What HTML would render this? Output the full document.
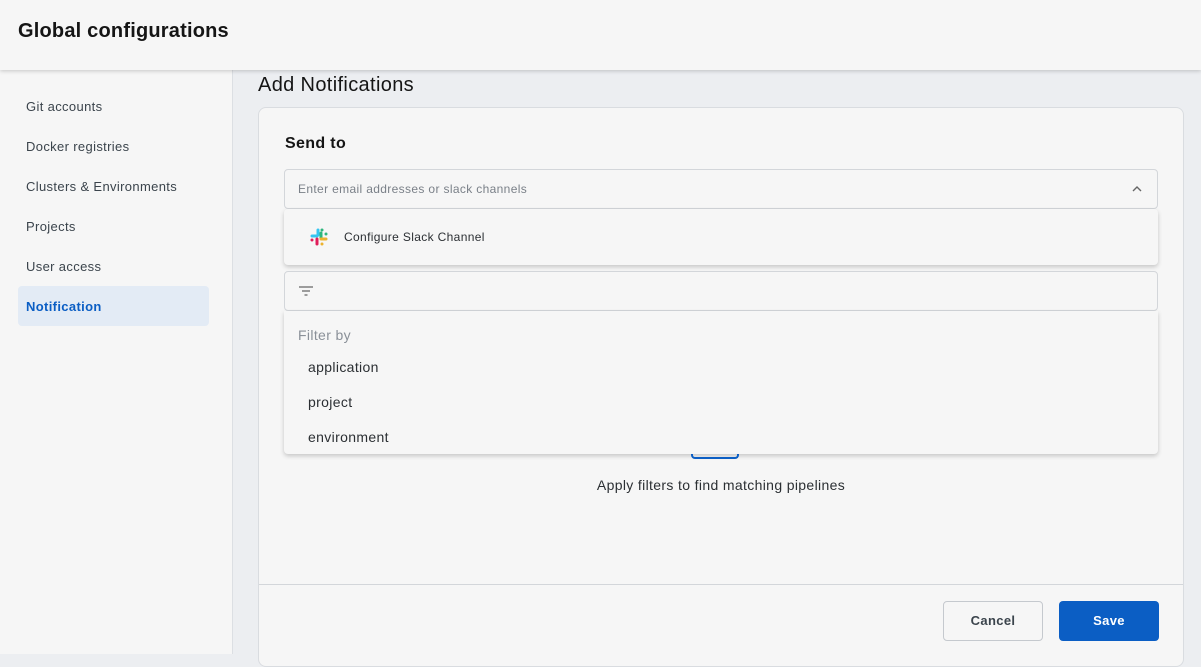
<!DOCTYPE html>
<html><head><meta charset="utf-8"><style>
*{box-sizing:border-box;margin:0;padding:0}
body{width:1201px;height:654px;overflow:hidden;background:#eceef1;font-family:"Liberation Sans",sans-serif;color:#151515;position:relative;letter-spacing:0.35px}
.hdr{position:absolute;left:0;top:0;width:1201px;height:70px;background:#f6f6f6;box-shadow:0 1px 4px rgba(0,0,0,.2);z-index:2}
.hdr h1{position:absolute;left:18px;top:20px;font-size:20px;font-weight:bold;color:#151515;letter-spacing:0.2px}
.side{position:absolute;left:0;top:70px;width:233px;height:584px;background:#f6f6f6;border-right:1px solid #dcdfe3}
.side div{position:absolute;left:18px;width:191px;height:40px;line-height:42px;padding-left:8px;font-size:13px;color:#3b444c}
.side .act{background:#e3ebf5;color:#0b5ec4;font-weight:bold;border-radius:4px}
.title{position:absolute;left:258px;top:74px;font-size:20px;color:#151515}
.card{position:absolute;left:258px;top:107px;width:926px;height:560px;background:#f6f6f6;border:1px solid #d9dce0;border-radius:8px}
.lbl{position:absolute;left:26px;top:27px;font-size:16px;font-weight:bold}
.inp{position:absolute;left:25px;width:874px;height:40px;border:1px solid #d3d6da;border-radius:4px;background:#f6f6f6}
.dd{position:absolute;left:25px;width:874px;background:#f6f6f6;border-radius:4px;box-shadow:0 2px 5px rgba(0,0,0,.2)}
.foot{position:absolute;left:0;top:476px;width:924px;border-top:1px solid #d3d6da}
.btn{position:absolute;top:493px;width:100px;height:40px;border-radius:4px;font-size:13px;font-weight:bold;text-align:center;line-height:40px}
</style></head><body>
<div class="hdr"><h1>Global configurations</h1></div>
<div class="side">
<div style="top:16px">Git accounts</div>
<div style="top:56px">Docker registries</div>
<div style="top:96px">Clusters &amp; Environments</div>
<div style="top:136px">Projects</div>
<div style="top:176px">User access</div>
<div class="act" style="top:216px">Notification</div>
</div>
<div class="title">Add Notifications</div>
<div class="card">
<div class="lbl">Send to</div>
<div class="inp" style="top:61px"><span style="position:absolute;left:13px;top:12px;font-size:12px;color:#7a8088">Enter email addresses or slack channels</span>
<svg style="position:absolute;right:14px;top:13px" width="12" height="12" viewBox="0 0 12 12"><path d="M2 8 L6 4 L10 8" fill="none" stroke="#666" stroke-width="1.4"/></svg></div>
<div class="dd" style="top:101px;height:56px">
<svg style="position:absolute;left:26px;top:19px" width="18" height="18" viewBox="0 0 18 18">
<rect x="6.5" y="0.5" width="3" height="8" rx="1.5" fill="#36c5f0"/><rect x="0.5" y="6.5" width="8" height="3" rx="1.5" fill="#36c5f0"/>
<rect x="9.5" y="3.5" width="3" height="8" rx="1.5" fill="#2eb67d"/><rect x="10.5" y="0.5" width="3" height="3" rx="1.5" fill="#2eb67d"/>
<rect x="9.5" y="9.5" width="8" height="3" rx="1.5" fill="#ecb22e"/><rect x="14.5" y="4.5" width="3" height="3" rx="1.5" fill="#2eb67d"/>
<rect x="5.5" y="9.5" width="3" height="8" rx="1.5" fill="#e01e5a"/><rect x="0.5" y="10.5" width="3" height="3" rx="1.5" fill="#e01e5a"/>
<rect x="10.5" y="14.5" width="3" height="3" rx="1.5" fill="#ecb22e"/></svg>
<span style="position:absolute;left:60px;top:21px;font-size:12px;color:#2b2f33">Configure Slack Channel</span></div>
<div class="inp" style="top:163px"><svg style="position:absolute;left:13px;top:13px" width="16" height="12" viewBox="0 0 16 12"><path d="M1 2H15M4 6H12M6.5 10H9.5" stroke="#666" stroke-width="1.3"/></svg></div>
<div class="dd" style="top:203px;height:143px;border-top-left-radius:0;border-top-right-radius:0">
<div style="position:absolute;left:14px;top:16px;font-size:14px;color:#8a9098">Filter by</div>
<div style="position:absolute;left:24px;top:48px;font-size:14px;color:#2b2f33">application</div>
<div style="position:absolute;left:24px;top:83px;font-size:14px;color:#2b2f33">project</div>
<div style="position:absolute;left:24px;top:118px;font-size:14px;color:#2b2f33">environment</div>
</div>
<div style="position:absolute;left:432px;top:346px;width:48px;height:5px;border:2px solid #0b5ec4;border-top:none;border-radius:0 0 4px 4px"></div>
<div style="position:absolute;left:0;width:924px;top:369px;text-align:center;font-size:14px;color:#2b2f33">Apply filters to find matching pipelines</div>
<div class="foot"></div>
<div class="btn" style="left:684px;border:1px solid #c5c9ce;color:#3b444c;background:#f6f6f6;line-height:38px">Cancel</div>
<div class="btn" style="left:800px;background:#0b5ec4;color:#fff">Save</div>
</div>
</body></html>
